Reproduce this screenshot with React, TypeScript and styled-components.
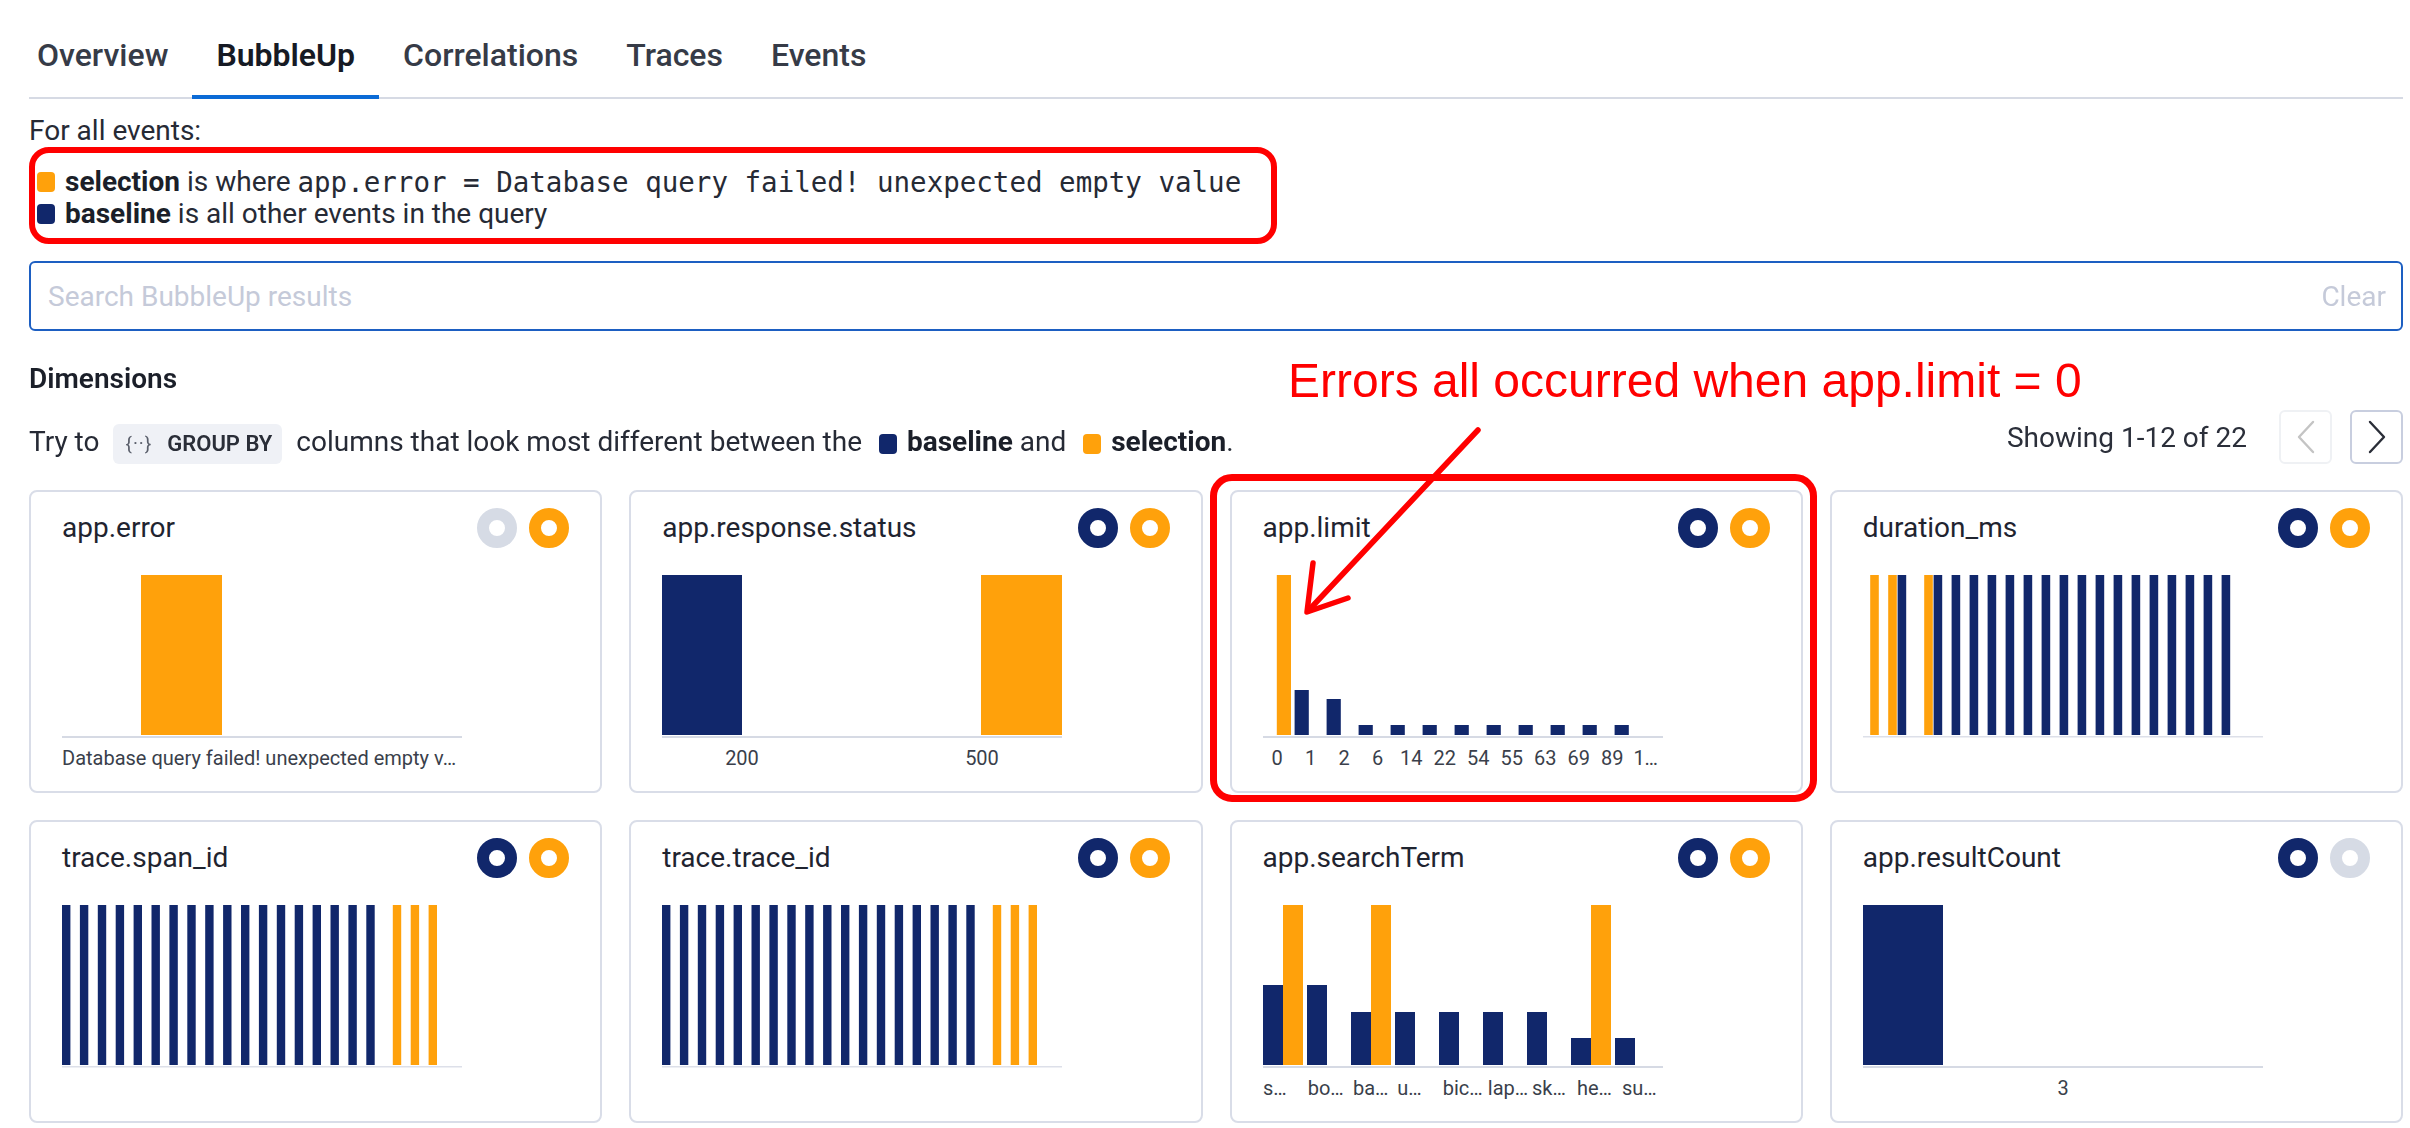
import React from "react";
import styled, { createGlobalStyle } from "styled-components";

const NAVY = "#11276b";
const ORANGE = "#ffa10b";
const MUTED = "#d6dbe5";
const RED = "#ff0000";

const GlobalStyle = createGlobalStyle`
  html, body { margin: 0; padding: 0; background: #ffffff; }
  body {
    font-family: Roboto, "Noto Sans", sans-serif;
    color: #1f2430;
    -webkit-font-smoothing: antialiased;
  }
  * { box-sizing: border-box; }
`;

const Page = styled.div`
  position: relative;
  width: 2410px;
  height: 1128px;
  overflow: hidden;
  padding: 31px 7px 0 29px;
`;

const TabList = styled.nav`
  display: flex;
  border-bottom: 2px solid #d6dae4;
`;

const Tab = styled.div<{ $active?: boolean }>`
  padding: 0 24px 16px;
  margin-bottom: -2px;
  font-size: 32px;
  line-height: 48px;
  font-weight: ${(p) => (p.$active ? 600 : 500)};
  color: ${(p) => (p.$active ? "#161a24" : "#363b47")};
  border-bottom: 4px solid ${(p) => (p.$active ? "#0b6bd6" : "transparent")};
  &:first-child {
    padding-left: 8px;
  }
`;

const Intro = styled.div`
  margin-top: 16px;
  font-size: 28px;
  line-height: 32px;
  color: #262a35;
`;

const LegendBox = styled.div`
  width: fit-content;
  border: 6px solid ${RED};
  border-radius: 20px;
  padding: 13px 30px 8px 2px;
  display: flex;
  flex-direction: column;
`;

const LegendRow = styled.div`
  display: flex;
  align-items: center;
  font-size: 28px;
  line-height: 32px;
  color: #262a35;
  white-space: pre;
`;

const Swatch = styled.span<{ $color: string }>`
  display: inline-block;
  flex: none;
  width: 18px;
  height: 20px;
  border-radius: 4px;
  background: ${(p) => p.$color};
  margin-right: 10px;
`;

const InlineSwatch = styled(Swatch)`
  margin: 0 10px;
  vertical-align: -3px;
`;

const Strong = styled.span`
  font-weight: 700;
  color: #1b1f29;
`;

const Code = styled.span`
  font-family: "DejaVu Sans Mono", "Liberation Mono", monospace;
  font-size: 27.5px;
  color: #262a35;
`;

const SearchBox = styled.label`
  margin-top: 17px;
  height: 70px;
  display: flex;
  align-items: center;
  border: 2px solid #1d5fc2;
  border-radius: 6px;
  padding: 0 15px 0 17px;
`;

const SearchInput = styled.input`
  flex: 1;
  border: none;
  outline: none;
  background: transparent;
  font-family: Roboto, sans-serif;
  font-size: 28px;
  color: #1f2430;
  caret-color: #000;
  padding: 0;
  &::placeholder {
    color: #c5cad9;
  }
`;

const ClearText = styled.span`
  font-size: 28px;
  color: #c5cad9;
`;

const SectionTitle = styled.h2`
  margin: 32px 0 0;
  font-size: 28px;
  line-height: 32px;
  font-weight: 600;
  color: #1b1f29;
`;

const Toolbar = styled.div`
  margin-top: 15px;
  height: 54px;
  display: flex;
  align-items: center;
  justify-content: space-between;
`;

const Hint = styled.p`
  margin: 10px 0 0;
  height: 40px;
  font-size: 28px;
  line-height: 40px;
  color: #262a35;
  white-space: nowrap;
`;

const Chip = styled.span`
  display: inline-flex;
  align-items: center;
  vertical-align: middle;
  gap: 15px;
  height: 40px;
  margin: 0 7px 0 14px;
  padding: 0 10px 0 12px;
  border-radius: 6px;
  background: #eff1f6;
`;

const ChipIcon = styled.span`
  font-size: 19px;
  line-height: 40px;
  letter-spacing: 1px;
  color: #5a5f6b;
`;

const ChipText = styled.span`
  font-size: 22px;
  line-height: 40px;
  font-weight: 600;
  color: #2a2e38;
`;

const Pager = styled.div`
  display: flex;
  align-items: center;
`;

const PagerText = styled.span`
  font-size: 28px;
  color: #2b2f3a;
  margin-right: 32px;
`;

const PageButton = styled.button<{ $disabled?: boolean }>`
  width: 53px;
  height: 54px;
  display: flex;
  align-items: center;
  justify-content: center;
  padding: 0;
  background: #fff;
  border-radius: 6px;
  border: 2px solid ${(p) => (p.$disabled ? "#eff1f4" : "#c8cedf")};
  color: ${(p) => (p.$disabled ? "#c4c4c4" : "#2a2e38")};
  & + & {
    margin-left: 18px;
  }
`;

const Grid = styled.div`
  margin-top: 26px;
  display: grid;
  grid-template-columns: repeat(4, 1fr);
  gap: 27px;
`;

const Card = styled.div`
  position: relative;
  height: 303px;
  border: 2px solid #d9dde8;
  border-radius: 8px;
  padding: 16px 31px;
  background: #fff;
`;

const Highlight = styled.div`
  position: absolute;
  top: -18px;
  left: -22px;
  right: -16px;
  bottom: -11px;
  border: 7px solid ${RED};
  border-radius: 22px;
  pointer-events: none;
`;

const CardHeader = styled.div`
  display: flex;
  align-items: center;
  justify-content: space-between;
  height: 40px;
`;

const CardTitle = styled.div`
  font-size: 28px;
  line-height: 32px;
  color: #1f2430;
`;

const Toggles = styled.div`
  display: flex;
  gap: 12px;
`;

const Donut = styled.span<{ $color: string }>`
  display: block;
  width: 40px;
  height: 40px;
  border-radius: 50%;
  border: 12px solid ${(p) => p.$color};
  background: #fff;
`;

const ChartSvg = styled.svg`
  display: block;
  margin-top: 27px;
  overflow: visible;
`;

const AxisLabel = styled.text`
  font-family: Roboto, sans-serif;
  font-size: 20px;
  fill: #3a3f4b;
`;

const Annotation = styled.div`
  position: absolute;
  left: 1288px;
  top: 357px;
  font-family: "Liberation Sans", Arial, sans-serif;
  font-size: 48px;
  line-height: 48px;
  color: ${RED};
  white-space: nowrap;
`;

const ArrowSvg = styled.svg`
  position: absolute;
  left: 1290px;
  top: 420px;
  overflow: visible;
  pointer-events: none;
`;

type Bar = { x: number; w: number; h: number; c: "n" | "o" };
type Label = { x: number; text: string; anchor?: "start" | "middle" };
type CardData = {
  title: string;
  toggles: [string, string];
  bars: Bar[];
  labels: Label[];
  thinAxis?: boolean;
  highlight?: boolean;
};

const range = (a: number, b: number) => Array.from({ length: b - a + 1 }, (_, i) => a + i);

const limitHeights = [0, 45, 36, 10, 10, 10, 10, 10, 10, 10, 10, 10];
const limitLabels = ["0", "1", "2", "6", "14", "22", "54", "55", "63", "69", "89", "1…"];

const durationOrange = [0, 1, 3];
const durationNavy = [2, ...range(4, 20)];

const traceBars: Bar[] = [
  ...range(0, 17).map((k) => ({ x: 17.9 * k, w: 8.4, h: 160, c: "n" as const })),
  ...range(18, 20).map((k) => ({ x: 17.9 * k + 8.6, w: 8.4, h: 160, c: "o" as const })),
];

const searchNavy = [80, 80, 53, 53, 53, 53, 53, 27, 27];
const searchOrange = [160, 0, 160, 0, 0, 0, 0, 160, 0];
const searchLabels = ["s…", "bo…", "ba…", "u…", "bic…", "lap…", "sk…", "he…", "su…"];
const searchLabelX = [0, 44.7, 90, 134.3, 179.7, 224.8, 269, 314, 359];

const cards: CardData[] = [
  {
    title: "app.error",
    toggles: [MUTED, ORANGE],
    bars: [{ x: 79, w: 81, h: 160, c: "o" }],
    labels: [{ x: 0, text: "Database query failed! unexpected empty v…", anchor: "start" }],
  },
  {
    title: "app.response.status",
    toggles: [NAVY, ORANGE],
    bars: [
      { x: 0, w: 80, h: 160, c: "n" },
      { x: 319, w: 81, h: 160, c: "o" },
    ],
    labels: [
      { x: 80, text: "200" },
      { x: 320, text: "500" },
    ],
  },
  {
    title: "app.limit",
    toggles: [NAVY, ORANGE],
    highlight: true,
    bars: [
      { x: 13.8, w: 14.2, h: 160, c: "o" },
      ...range(1, 11).map((k) => ({ x: 32 * k - 0.4, w: 14.2, h: limitHeights[k], c: "n" as const })),
    ],
    labels: limitLabels.map((t, i) => ({ x: 14.2 + 33.5 * i, text: t })),
  },
  {
    title: "duration_ms",
    toggles: [NAVY, ORANGE],
    thinAxis: true,
    bars: [
      ...durationOrange.map((k) => ({ x: 18 * k - 1.4 + 8.6, w: 8.6, h: 160, c: "o" as const })),
      ...durationNavy.map((k) => ({ x: 18 * k - 1.4, w: 8.6, h: 160, c: "n" as const })),
    ],
    labels: [],
  },
  { title: "trace.span_id", toggles: [NAVY, ORANGE], thinAxis: true, bars: traceBars, labels: [] },
  { title: "trace.trace_id", toggles: [NAVY, ORANGE], thinAxis: true, bars: traceBars, labels: [] },
  {
    title: "app.searchTerm",
    toggles: [NAVY, ORANGE],
    bars: [
      ...searchNavy.map((h, k) => ({ x: 44 * k, w: 20, h, c: "n" as const })),
      ...searchOrange
        .map((h, k) => ({ x: 44 * k + 20, w: 20, h, c: "o" as const }))
        .filter((b) => b.h > 0),
    ],
    labels: searchLabels.map((t, i) => ({ x: searchLabelX[i], text: t, anchor: "start" as const })),
  },
  {
    title: "app.resultCount",
    toggles: [NAVY, MUTED],
    bars: [{ x: 0, w: 80, h: 160, c: "n" }],
    labels: [{ x: 200, text: "3" }],
  },
];

const Chart: React.FC<{ data: CardData }> = ({ data }) => (
  <ChartSvg width={400} height={200} viewBox="0 0 400 200">
    {data.bars.map((b, i) => (
      <rect key={i} x={b.x} y={160 - b.h} width={b.w} height={b.h} fill={b.c === "n" ? NAVY : ORANGE} />
    ))}
    <rect
      x={0}
      y={161}
      width={400}
      height={data.thinAxis ? 1.5 : 2}
      fill={data.thinAxis ? "#dde0e9" : "#d6dae4"}
    />
    {data.labels.map((l, i) => (
      <AxisLabel key={i} x={l.x} y={190} textAnchor={l.anchor ?? "middle"}>
        {l.text}
      </AxisLabel>
    ))}
  </ChartSvg>
);

const DimensionCard: React.FC<{ data: CardData }> = ({ data }) => (
  <Card>
    <CardHeader>
      <CardTitle>{data.title}</CardTitle>
      <Toggles>
        <Donut $color={data.toggles[0]} />
        <Donut $color={data.toggles[1]} />
      </Toggles>
    </CardHeader>
    <Chart data={data} />
    {data.highlight && <Highlight />}
  </Card>
);

const Chevron: React.FC<{ dir: "left" | "right" }> = ({ dir }) => (
  <svg width="18" height="34" viewBox="0 0 18 34" fill="none">
    <polyline
      points={dir === "right" ? "2,2 16,17 2,32" : "16,2 2,17 16,32"}
      stroke="currentColor"
      strokeWidth="2.4"
      strokeLinecap="round"
      strokeLinejoin="round"
    />
  </svg>
);

export default function App() {
  return (
    <>
      <GlobalStyle />
      <Page>
        <TabList>
          <Tab>Overview</Tab>
          <Tab $active>BubbleUp</Tab>
          <Tab>Correlations</Tab>
          <Tab>Traces</Tab>
          <Tab>Events</Tab>
        </TabList>

        <Intro>For all events:</Intro>
        <LegendBox>
          <LegendRow>
            <Swatch $color={ORANGE} />
            <Strong>selection</Strong>
            {" is where "}
            <Code>app.error = Database query failed! unexpected empty value</Code>
          </LegendRow>
          <LegendRow>
            <Swatch $color={NAVY} />
            <Strong>baseline</Strong>
            {" is all other events in the query"}
          </LegendRow>
        </LegendBox>

        <SearchBox>
          <SearchInput autoFocus placeholder="Search BubbleUp results" />
          <ClearText>Clear</ClearText>
        </SearchBox>

        <SectionTitle>Dimensions</SectionTitle>

        <Toolbar>
          <Hint>
            Try to
            <Chip>
              <ChipIcon>{"{··}"}</ChipIcon>
              <ChipText>GROUP BY</ChipText>
            </Chip>
            {" columns that look most different between the "}
            <InlineSwatch $color={NAVY} />
            <Strong>baseline</Strong>
            {" and "}
            <InlineSwatch $color={ORANGE} />
            <Strong>selection</Strong>.
          </Hint>
          <Pager>
            <PagerText>Showing 1-12 of 22</PagerText>
            <PageButton $disabled aria-label="Previous page">
              <Chevron dir="left" />
            </PageButton>
            <PageButton aria-label="Next page">
              <Chevron dir="right" />
            </PageButton>
          </Pager>
        </Toolbar>

        <Grid>
          {cards.map((c) => (
            <DimensionCard key={c.title} data={c} />
          ))}
        </Grid>

        <Annotation>Errors all occurred when app.limit = 0</Annotation>
        <ArrowSvg width={200} height={205} viewBox="0 0 200 205">
          <g stroke={RED} strokeWidth={5.5} strokeLinecap="round" strokeLinejoin="round" fill="none">
            <line x1={188} y1={10} x2={18} y2={191} />
            <polyline points="23,143 17,192 58,178" />
          </g>
        </ArrowSvg>
      </Page>
    </>
  );
}
